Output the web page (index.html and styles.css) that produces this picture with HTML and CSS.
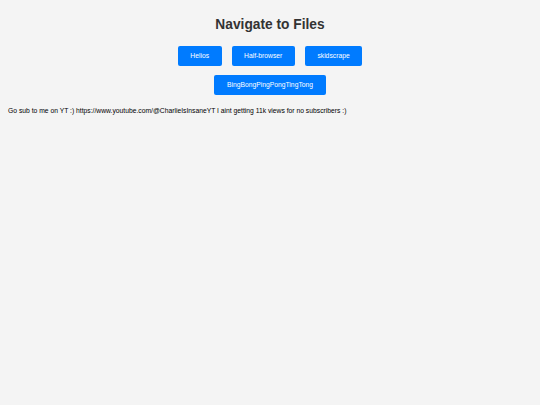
FILE: index.html
```html
<!DOCTYPE html>
<html>
<head>
<meta charset="utf-8">
<link rel="stylesheet" href="styles.css">
</head>
<body>
<h1 class="title">Navigate to Files</h1>
<div class="buttons">
  <a class="btn" href="#">Helios</a>
  <a class="btn" href="#">Half-browser</a>
  <a class="btn" href="#">skidscrape</a>
  <a class="btn" href="#">BingBongPingPongTingTong</a>
</div>
<p class="note">Go sub to me on YT :) https://www.youtube.com/@CharlieIsInsaneYT I aint getting 11k views for no subscribers :)</p>
</body>
</html>
```
FILE: styles.css
```css
html, body {
  margin: 0;
  padding: 0;
  background: #f4f4f4;
}
body {
  font-family: "Liberation Sans", Arial, sans-serif;
  color: #000;
  padding: 0 8px;
}
.title {
  margin: 0;
  padding-top: 16px;
  text-align: center;
  font-size: 13.75px;
  line-height: 17px;
  font-weight: bold;
  color: #333;
}
.buttons {
  display: flex;
  flex-wrap: wrap;
  justify-content: center;
  gap: 9px 10px;
  width: 200px;
  margin: 13px auto 0;
}
.btn {
  display: block;
  height: 20px;
  line-height: 20px;
  padding: 0 12.5px;
  background: #007bff;
  color: #fff;
  font-size: 6.75px;
  text-decoration: none;
  border-radius: 2px;
}
.note {
  margin: 11px 0 0;
  font-size: 6.75px;
  line-height: 10px;
}
```
